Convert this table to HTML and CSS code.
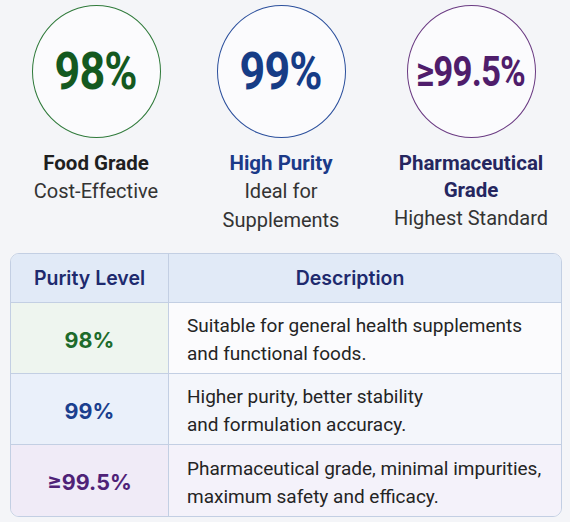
FILE: index.html
```html
<!DOCTYPE html>
<html lang="en">

<head>
    <meta charset="UTF-8">
    <meta name="viewport" content="width=device-width, initial-scale=1.0">
    <title>Purity Grades</title>
    <link rel="stylesheet" href="styles.css">
</head>

<body>
    <div class="page">
        <div class="grades">
            <div class="grade">
                <div class="circle green"><span>98%</span></div>
                <h3 class="title dark">Food Grade</h3>
                <p class="sub">Cost-Effective</p>
            </div>
            <div class="grade">
                <div class="circle blue"><span>99%</span></div>
                <h3 class="title navy">High Purity</h3>
                <p class="sub">Ideal for<br>Supplements</p>
            </div>
            <div class="grade">
                <div class="circle purple"><span class="small">≥99.5%</span></div>
                <h3 class="title indigo">Pharmaceutical<br>Grade</h3>
                <p class="sub">Highest Standard</p>
            </div>
        </div>

        <table class="tbl">
            <thead>
                <tr>
                    <th class="c1">Purity Level</th>
                    <th class="c2">Description</th>
                </tr>
            </thead>
            <tbody>
                <tr class="r1">
                    <td class="lvl">98%</td>
                    <td class="desc">Suitable for general health supplements<br>and functional foods.</td>
                </tr>
                <tr class="r2">
                    <td class="lvl">99%</td>
                    <td class="desc">Higher purity, better stability<br>and formulation accuracy.</td>
                </tr>
                <tr class="r3">
                    <td class="lvl">≥99.5%</td>
                    <td class="desc">Pharmaceutical grade, minimal impurities,<br>maximum safety and efficacy.</td>
                </tr>
            </tbody>
        </table>
    </div>
</body>

</html>
```

FILE: styles.css
```css
* {
    margin: 0px;
    padding: 0px;
    box-sizing: border-box;
}

body {
    background-color: #f4f5f8;
    font-family: Roboto, "Liberation Sans", sans-serif;
    color: #2b2b2b;
}

.page {
    width: 570px;
    height: 522px;
    padding: 5px 8px 0 10px;
}

.grades {
    display: grid;
    grid-template-columns: 184px 186px 194px;
    margin-left: -6px;
}

.grade {
    display: flex;
    flex-direction: column;
    align-items: center;
    text-align: center;
}

.circle {
    width: 129px;
    height: 133px;
    border-radius: 50%;
    background-color: #fbfbfd;
    border: 1.5px solid;
    display: flex;
    justify-content: center;
    align-items: center;
    font-family: Roboto, sans-serif;
    font-weight: bold;
    font-size: 51px;
    margin-bottom: 12px;
}

.circle span {
    display: inline-block;
    transform: scaleX(0.88);
    letter-spacing: -1px;
}

.circle .small {
    font-size: 42px;
    transform: scaleX(0.83);
}

.green {
    border-color: #2f7a3a;
    color: #14591f;
}

.blue {
    border-color: #2b4f9c;
    color: #163c86;
}

.purple {
    border-color: #6a3a82;
    color: #4f1d6b;
}

.title {
    font-size: 20.5px;
    font-weight: 700;
    line-height: 27px;
}

.dark {
    color: #1f1f1f;
}

.navy {
    color: #1b3a88;
}

.indigo {
    color: #25265f;
}

.sub {
    font-size: 20px;
    line-height: 29px;
    color: #333;
}

.tbl {
    margin-top: 18px;
    width: 552px;
    border-collapse: separate;
    border-spacing: 0;
    border: 1px solid #c3cfe3;
    border-radius: 9px;
    overflow: hidden;
    font-family: Inter, Roboto, sans-serif;
}

.tbl th {
    background-color: #e1eaf7;
    color: #1e2a6e;
    font-size: 19.5px;
    font-weight: 600;
    height: 49px;
    border-bottom: 1px solid #c3cfe3;
}

.c1 {
    width: 158px;
    border-right: 1px solid #c3cfe3;
}

.c2 {
    padding-right: 30px;
}

.tbl td {
    height: 71px;
    border-bottom: 1px solid #c3cfe3;
}

.tbl tr:last-child td {
    border-bottom: none;
}

.lvl {
    text-align: center;
    font-size: 21.5px;
    font-weight: 700;
    padding-top: 3px;
    border-right: 1px solid #c3cfe3;
}

.desc {
    font-family: Roboto, "Liberation Sans", sans-serif;
    font-size: 19px;
    line-height: 28px;
    padding-left: 18px;
    padding-top: 4px;
    color: #242424;
}

.r1 .lvl {
    background-color: #eef5ef;
    color: #1d6b2b;
}

.r1 .desc {
    background-color: #fbfbfd;
}

.r2 .lvl {
    background-color: #eaf0fa;
    color: #1b3f8e;
}

.r2 .desc {
    background-color: #f4f6fb;
}

.r3 .lvl {
    background-color: #f0ebf7;
    color: #4f2277;
}

.r3 .desc {
    background-color: #f4f2fa;
}
```
